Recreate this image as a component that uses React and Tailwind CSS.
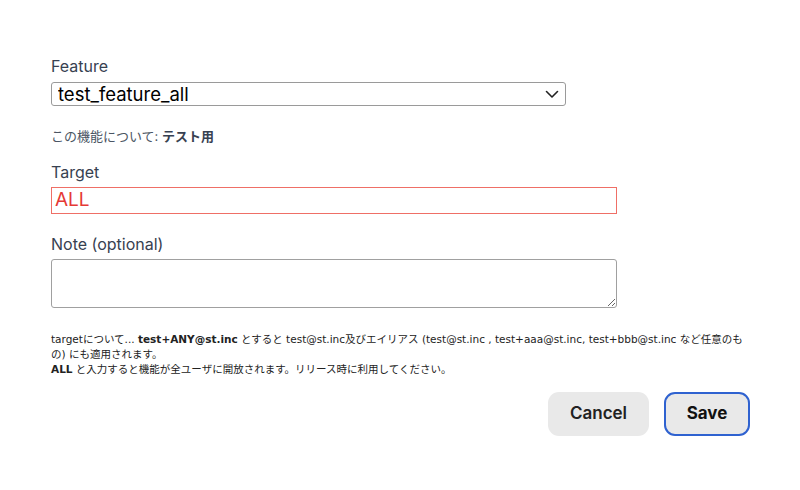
import React from 'react'

const font = { fontFamily: 'Inter, "Noto Sans CJK JP", sans-serif' }
const helpFont = { fontFamily: '"DejaVu Sans", "Noto Sans CJK JP", sans-serif' }

export default function App() {
  return (
    <main className="min-h-screen bg-white" style={font}>
      <div className="w-[699px] ml-[51px] pt-[56px]">

        {/* Feature */}
        <label className="block text-[16px] leading-[20px] text-[#374151] mb-[6px]">Feature</label>
        <div className="relative w-[515px]">
          <select
            defaultValue="test_feature_all"
            className="appearance-none w-full h-[24px] border border-[#9a9a9a] rounded-[3px] pl-[6px] text-[18.5px] leading-[22px] text-black bg-white outline-none"
          >
            <option value="test_feature_all">test_feature_all</option>
          </select>
          <svg className="absolute right-[7px] top-[8px] pointer-events-none" width="14" height="9" viewBox="0 0 14 9" fill="none">
            <path d="M1.5 1.5 L7 7 L12.5 1.5" stroke="#222" strokeWidth="1.6" strokeLinecap="round" strokeLinejoin="round" />
          </svg>
        </div>
        <p className="mt-[20px] text-[13px] leading-[18px] text-[#4b5563]">
          この機能について: <span className="font-bold text-[#374151]">テスト用</span>
        </p>

        {/* Target */}
        <label className="block mt-[17px] text-[16px] leading-[20px] text-[#374151] mb-[5px]">Target</label>
        <input
          defaultValue="ALL"
          className="block w-[566px] h-[27px] border border-[#ef6f66] px-[3px] text-[19px] text-[#e53935] outline-none"
        />

        {/* Note */}
        <label className="block mt-[20px] text-[16px] leading-[20px] text-[#374151] mb-[5px]">Note (optional)</label>
        <textarea className="block w-[566px] h-[49px] border border-[#a0a0a0] rounded-[3px] px-[4px] outline-none" />

        {/* Help */}
        <div className="mt-[24px] text-[10.5px] leading-[15px] text-[#222]" style={helpFont}>
          <p>
            targetについて... <span className="font-bold">test+ANY@st.inc</span> とすると test@st.inc及びエイリアス (test@st.inc , test+aaa@st.inc, test+bbb@st.inc など任意のもの) にも適用されます。
          </p>
          <p>
            <span className="font-bold">ALL</span> と入力すると機能が全ユーザに開放されます。リリース時に利用してください。
          </p>
        </div>

        {/* Actions */}
        <div className="flex justify-end gap-[15px] mt-[15px]">
          <button className="w-[101px] h-[44px] rounded-[11px] bg-[#e9e9e9] text-[17px] font-semibold text-[#222]">Cancel</button>
          <button className="w-[86px] h-[44px] rounded-[11px] bg-[#e9e9e9] border-2 border-[#2f62d0] text-[17px] font-bold text-[#111]">Save</button>
        </div>

      </div>
    </main>
  )
}
